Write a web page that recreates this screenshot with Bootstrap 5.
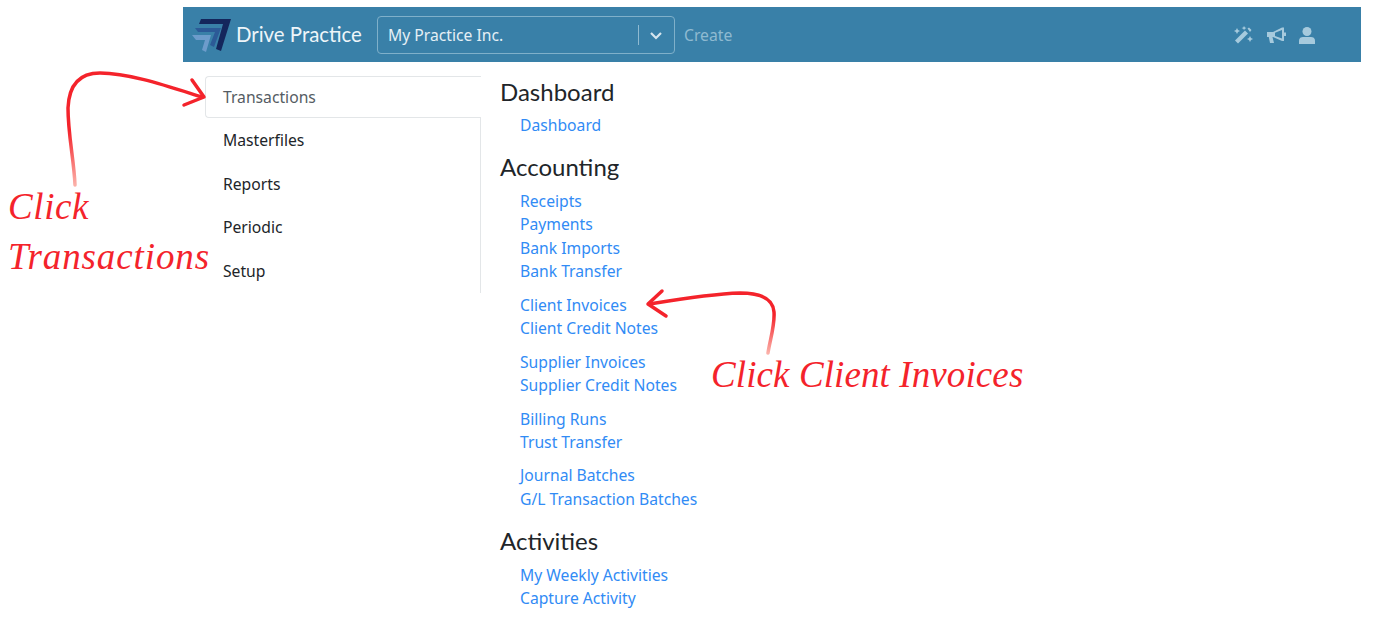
<!DOCTYPE html>
<html lang="en">
<head>
    <meta charset="UTF-8">
    <title>Drive Practice</title>
    <link href="https://cdn.jsdelivr.net/npm/bootstrap@5.3.0/dist/css/bootstrap.min.css" rel="stylesheet">
    <style>
        body {
            background: #fff;
            color: #212529;
            font-family: "Noto Sans", sans-serif;
            font-size: 15.7px;
            overflow: hidden;
        }
        .app-frame { width: 1178px; margin: 7px 0 0 183px; }
        .top-bar { height: 55px; background: #3980a8; padding-left: 9px; }
        .brand-name { font-family: Lato, sans-serif; font-size: 20.4px; color: #eef5f9; margin-left: 5px; width: 126px; white-space: nowrap; }
        .practice-select {
            width: 298px; height: 38px; margin-left: 15px;
            border: 1px solid #7fb0ca; border-radius: 4px; color: #e4eff5; padding-left: 10px;
        }
        .practice-name { padding-top: 2px; }
        .select-sep { width: 1px; height: 20px; background: #8fbad1; margin: 0 10px 0 auto; }
        .select-caret { margin-right: 11px; }
        .create-link { color: #8fbad1; margin-left: 9px; padding-top: 2px; }
        .bar-icons { margin-left: auto; margin-right: 46px; gap: 13px; padding-top: 1px; }
        .side-menu { width: 298px; padding: 14px 0 0 22px; }
        .side-list { border-right: 1px solid #e3e6e8; height: 217px; }
        .side-item { height: 43.4px; padding: 3px 0 0 18px; display: flex; align-items: center; color: #212529; text-decoration: none; }
        .side-item.current {
            height: 42px; margin-right: -1px; background: #fff; color: #555c63; padding-top: 2px;
            border: 1px solid #e3e6e8; border-right: 0; border-radius: 4px 0 0 4px; padding-left: 17px;
        }
        .main-links { padding: 14.500px 0 0 19px; }
        .group-title { font-family: Lato, sans-serif; font-size: 24px; font-weight: 400; line-height: 29px; margin: 0 0 8.500px; }
        .link-list { margin: 0 0 10px 20px; padding: 0; list-style: none; line-height: 23.45px; }
        .link-list a { color: #318bf5; text-decoration: none; }
        .section-gap { margin-bottom: 15px; }
        .note-layer { position: absolute; inset: 0; pointer-events: none; }
        .hand-note {
            position: absolute; color: #f4232b; white-space: nowrap;
            font-family: "Liberation Serif", serif; font-style: italic; font-size: 37px; line-height: 40px;
        }
        .note-click { left: 8px; top: 187px; letter-spacing: 0.6px; }
        .note-transactions { left: 8px; top: 237px; letter-spacing: 0.9px; }
        .note-invoices { left: 711px; top: 355px; letter-spacing: 0.1px; }
    </style>
</head>
<body>
    <div class="app-frame">
        <nav class="top-bar d-flex align-items-center">
            <svg width="39" height="34" viewBox="0 0 39 34">
                <path d="M9 1H39L29 33L24 31L31 6H7Z" fill="#14265c"/>
                <path d="M3 10H29L22 29L18 27L23 14H6Z" fill="#2c5a97"/>
                <path d="M0 17H19L14 34L10 32L13 22H4Z" fill="#6d9ccb"/>
            </svg>
            <span class="brand-name">Drive Practice</span>
            <div class="practice-select d-flex align-items-center">
                <span class="practice-name">My Practice Inc.</span>
                <span class="select-sep"></span>
                <svg class="select-caret" width="14" height="14" viewBox="0 0 14 14"><path d="M2 5L7 10L12 5" fill="none" stroke="#d5e5ee" stroke-width="2.2"/></svg>
            </div>
            <span class="create-link">Create</span>
            <div class="bar-icons d-flex align-items-center">
                <svg width="19" height="18" viewBox="0 0 19 18" fill="#a6cadd"><path d="M1 14.500L11 4.500L14 7.500L4 17.500Z"/><path d="M3 2L4 4L6 5L4 6L3 8L2 6L0 5L2 4ZM10 0L11 1.500L12.500 2L11 2.800L10 4L9.200 2.800L7.500 2L9.200 1.500ZM16 10L17 12L19 13L17 14L16 16L15 14L13 13L15 12ZM13.500 2.500L15 1.500L17.500 4L16 6Z"/></svg>
                <svg width="20" height="17" viewBox="0 0 20 17" fill="#a6cadd"><path d="M1 5H7L16 0.500H18V14H16L7 10H6.500L8 16H4L2.800 10H1ZM9 5.800V9L16 11.500V3Z" fill-rule="evenodd"/><path d="M18 5.500H20V9H18Z"/></svg>
                <svg width="16" height="17" viewBox="0 0 16 17" fill="#a6cadd"><circle cx="8" cy="4.500" r="4.500"/><path d="M0 17V13.500C0 11 2 10 4 10H12C14 10 16 11 16 13.500V17Z"/></svg>
            </div>
        </nav>
        <div class="d-flex">
            <div class="side-menu">
                <div class="side-list">
                    <a class="side-item current" href="#">Transactions</a>
                    <a class="side-item" href="#">Masterfiles</a>
                    <a class="side-item" href="#">Reports</a>
                    <a class="side-item" href="#">Periodic</a>
                    <a class="side-item" href="#">Setup</a>
                </div>
            </div>
            <div class="main-links">
                <h4 class="group-title">Dashboard</h4>
                <ul class="link-list section-gap"><li><a href="#">Dashboard</a></li></ul>
                <h4 class="group-title">Accounting</h4>
                <ul class="link-list">
                    <li><a href="#">Receipts</a></li>
                    <li><a href="#">Payments</a></li>
                    <li><a href="#">Bank Imports</a></li>
                    <li><a href="#">Bank Transfer</a></li>
                </ul>
                <ul class="link-list">
                    <li><a href="#">Client Invoices</a></li>
                    <li><a href="#">Client Credit Notes</a></li>
                </ul>
                <ul class="link-list">
                    <li><a href="#">Supplier Invoices</a></li>
                    <li><a href="#">Supplier Credit Notes</a></li>
                </ul>
                <ul class="link-list">
                    <li><a href="#">Billing Runs</a></li>
                    <li><a href="#">Trust Transfer</a></li>
                </ul>
                <ul class="link-list section-gap">
                    <li><a href="#">Journal Batches</a></li>
                    <li><a href="#">G/L Transaction Batches</a></li>
                </ul>
                <h4 class="group-title">Activities</h4>
                <ul class="link-list">
                    <li><a href="#">My Weekly Activities</a></li>
                    <li><a href="#">Capture Activity</a></li>
                </ul>
            </div>
        </div>
    </div>

    <!-- hand drawn notes sit on top of the page -->
    <div class="note-layer">
        <svg width="1380" height="634" viewBox="0 0 1380 634" fill="none" stroke="#f4232b" stroke-linecap="round" stroke-linejoin="round">
            <defs>
                <linearGradient id="tailLeft" gradientUnits="userSpaceOnUse" x1="0" y1="185" x2="0" y2="130">
                    <stop offset="0" stop-color="#fbb0a8"/><stop offset="1" stop-color="#f4232b"/>
                </linearGradient>
                <linearGradient id="tailRight" gradientUnits="userSpaceOnUse" x1="0" y1="353" x2="0" y2="315">
                    <stop offset="0" stop-color="#fbb0a8"/><stop offset="1" stop-color="#f4232b"/>
                </linearGradient>
            </defs>
            <path d="M75 185C74 160 68 135 68 108C69 84 80 73 100 73C130 73 170 87 202 97" stroke="url(#tailLeft)" stroke-width="3.500"/>
            <path d="M192 80L204 97L184 105" stroke-width="3.500"/>
            <path d="M768 353C770 340 775 325 774 312C773 298 760 293 740 293C710 294 680 299 649 304" stroke="url(#tailRight)" stroke-width="3.500"/>
            <path d="M662 291L648 304L666 316" stroke-width="3.500"/>
        </svg>
        <span class="hand-note note-click">Click</span>
        <span class="hand-note note-transactions">Transactions</span>
        <span class="hand-note note-invoices">Click Client Invoices</span>
    </div>
    <script src="https://cdn.jsdelivr.net/npm/bootstrap@5.3.0/dist/js/bootstrap.bundle.min.js"></script>
</body>
</html>
